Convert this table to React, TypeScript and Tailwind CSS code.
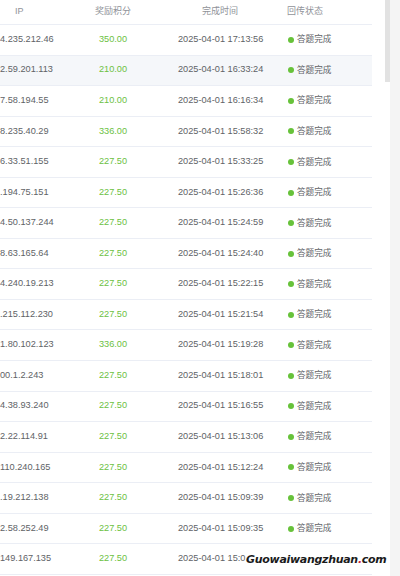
import React from "react";

type Row = { ip: string; points: string; time: string; status?: boolean };

const rows: Row[] = [
  { ip: "4.235.212.46", points: "350.00", time: "2025-04-01 17:13:56" },
  { ip: "2.59.201.113", points: "210.00", time: "2025-04-01 16:33:24" },
  { ip: "7.58.194.55", points: "210.00", time: "2025-04-01 16:16:34" },
  { ip: "8.235.40.29", points: "336.00", time: "2025-04-01 15:58:32" },
  { ip: "6.33.51.155", points: "227.50", time: "2025-04-01 15:33:25" },
  { ip: ".194.75.151", points: "227.50", time: "2025-04-01 15:26:36" },
  { ip: "4.50.137.244", points: "227.50", time: "2025-04-01 15:24:59" },
  { ip: "8.63.165.64", points: "227.50", time: "2025-04-01 15:24:40" },
  { ip: "4.240.19.213", points: "227.50", time: "2025-04-01 15:22:15" },
  { ip: ".215.112.230", points: "227.50", time: "2025-04-01 15:21:54" },
  { ip: "1.80.102.123", points: "336.00", time: "2025-04-01 15:19:28" },
  { ip: "00.1.2.243", points: "227.50", time: "2025-04-01 15:18:01" },
  { ip: "4.38.93.240", points: "227.50", time: "2025-04-01 15:16:55" },
  { ip: "2.22.114.91", points: "227.50", time: "2025-04-01 15:13:06" },
  { ip: "110.240.165", points: "227.50", time: "2025-04-01 15:12:24" },
  { ip: ".19.212.138", points: "227.50", time: "2025-04-01 15:09:39" },
  { ip: "2.58.252.49", points: "227.50", time: "2025-04-01 15:09:35" },
  // last row is partly hidden under the watermark
  { ip: "149.167.135", points: "227.50", time: "2025-04-01 15:0", status: false },
];

const font = "font-['Liberation_Sans','Noto_Sans_CJK_SC',sans-serif]";

export default function App() {
  return (
    <div className={`w-[400px] h-[576px] overflow-hidden bg-white relative flex ${font}`}>
      {/* Table */}
      <div className="w-[385px] shrink-0">
        <div className="w-[372px]">
          {/* Header */}
          <div className="flex items-center h-[25px] border-b border-[#ebeef5] text-[9px] text-[#909399]">
            <div className="w-[70px] pl-[15px]">IP</div>
            <div className="w-[86px] text-center">奖励积分</div>
            <div className="w-[128px] text-center">完成时间</div>
            <div className="flex-1 pl-[3px]">回传状态</div>
          </div>
          {rows.map((r, i) => (
            <div
              key={i}
              className={`flex items-center h-[30.55px] border-b border-[#ebeef5] text-[9.2px] text-[#606266] ${
                i === 1 ? "bg-[#f5f7fa]" : ""
              }`}
            >
              <div className="w-[70px] whitespace-nowrap">{r.ip}</div>
              <div className="w-[86px] text-center text-[#6cc13f]">{r.points}</div>
              <div className="w-[128px] pl-[22px] whitespace-nowrap">{r.time}</div>
              {r.status !== false && (
                <div className="flex-1 flex items-center pl-[4px] gap-[3px] text-[8.6px]">
                  <span className="w-[6px] h-[6px] rounded-full bg-[#67c23a]" />
                  <span>答题完成</span>
                </div>
              )}
            </div>
          ))}
        </div>
      </div>

      {/* Scrollbar */}
      <div className="w-[5px] shrink-0 flex flex-col">
        <div className="h-[82px] bg-[#e2e2e2]" />
      </div>
      <div className="flex-1 bg-[#f4f4f4]" />

      {/* Watermark */}
      <div className="absolute left-[246px] top-[552px] text-[11px] font-bold italic text-[#1a1a1a] font-['DejaVu_Sans',sans-serif] tracking-[-0.3px] [text-shadow:0_0_2px_#fff,0_0_2px_#fff]">
        Guowaiwangzhuan<span className="text-[#d0203a]">.</span>com
      </div>
    </div>
  );
}
